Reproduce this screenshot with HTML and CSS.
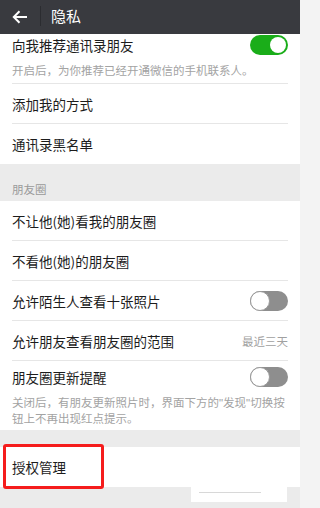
FILE: index.html
```html
<!DOCTYPE html>
<html lang="zh-CN">
<head>
<meta charset="utf-8">
<title>隐私</title>
<link rel="stylesheet" href="styles.css">
</head>
<body>
<div class="page">
  <header class="topbar">
    <svg class="back" width="16" height="14" viewBox="0 0 16 14" aria-hidden="true">
      <path d="M15 7H2.2M7.5 1.3 1.8 7l5.7 5.7" fill="none" stroke="#fff" stroke-width="2"/>
    </svg>
    <span class="divider"></span>
    <span class="title">隐私</span>
  </header>

  <section class="group">
    <div class="item item-tall">
      <div class="item-head">
        <span class="label">向我推荐通讯录朋友</span>
        <span class="switch on"><span class="knob"></span></span>
      </div>
      <p class="note">开启后，为你推荐已经开通微信的手机联系人。</p>
    </div>
    <div class="item"><span class="label">添加我的方式</span></div>
    <div class="item"><span class="label">通讯录黑名单</span></div>
  </section>

  <div class="section-title">朋友圈</div>

  <section class="group">
    <div class="item"><span class="label">不让他(她)看我的朋友圈</span></div>
    <div class="item"><span class="label">不看他(她)的朋友圈</span></div>
    <div class="item">
      <span class="label">允许陌生人查看十张照片</span>
      <span class="switch off"><span class="knob"></span></span>
    </div>
    <div class="item">
      <span class="label">允许朋友查看朋友圈的范围</span>
      <span class="value">最近三天</span>
    </div>
    <div class="item item-last">
      <div class="item-head">
        <span class="label">朋友圈更新提醒</span>
        <span class="switch off"><span class="knob"></span></span>
      </div>
      <p class="note note-two">关闭后，有朋友更新照片时，界面下方的<span class="q">"</span>发现<span class="q">"</span>切换按<br>钮上不再出现红点提示。</p>
    </div>
  </section>

  <div class="spacer"></div>

  <section class="group">
    <div class="item"><span class="label">授权管理</span></div>
  </section>

  <div class="highlight"></div>
  <div class="patch"><span class="patch-line"></span></div>
</div>
</body>
</html>
```

FILE: styles.css
```css
html, body {
  margin: 0;
  padding: 0;
}

body {
  background: #f3f3f3;
  font-family: "Noto Sans CJK SC", "Noto Sans", sans-serif;
  color: #1c1c1c;
}

.page {
  position: relative;
  width: 300px;
  height: 508px;
  overflow: hidden;
  background: #ebebeb;
}

.topbar {
  height: 34px;
  background: #393a3f;
  display: flex;
  align-items: center;
}

.back {
  margin-left: 12px;
  display: block;
}

.divider {
  width: 1px;
  height: 20px;
  background: #2b2c30;
  margin-left: 12px;
  margin-top: -2px;
}

.title {
  color: #fff;
  font-size: 15px;
  line-height: 20px;
  margin-left: 10px;
  margin-top: -3px;
}

.group {
  background: #fff;
  padding: 0 12px;
}

.item {
  box-sizing: border-box;
  height: 40px;
  display: flex;
  align-items: center;
  justify-content: space-between;
  border-bottom: 1px solid #e6e6e6;
}

.item:last-child {
  border-bottom: none;
}

.item-tall {
  height: 50px;
  display: block;
  padding-top: 1px;
}

.item-last {
  height: 69px;
  display: block;
  padding-top: 6px;
}

.item-head {
  display: flex;
  align-items: center;
  justify-content: space-between;
  height: 20px;
}

.label {
  font-size: 13.5px;
  line-height: 20px;
}

.value {
  font-size: 11.5px;
  color: #a0a0a0;
}

.note {
  margin: 7px 0 0;
  font-size: 11.5px;
  line-height: 16px;
  color: #a3a3a3;
  white-space: nowrap;
}

.note-two {
  margin-top: 8px;
  line-height: 15px;
}

.q {
  font-family: "Liberation Sans", sans-serif;
}

.switch {
  box-sizing: border-box;
  width: 38px;
  height: 20px;
  border-radius: 10px;
  display: flex;
  align-items: center;
  flex-shrink: 0;
}

.switch.on {
  background: #1aad19;
  justify-content: flex-end;
  padding: 0 2px;
}

.switch.on .knob {
  width: 16px;
  height: 16px;
  border-radius: 50%;
  background: #fff;
}

.switch.off {
  background: #8e8e8e;
  justify-content: flex-start;
}

.switch.off .knob {
  box-sizing: border-box;
  width: 20px;
  height: 20px;
  border-radius: 50%;
  background: #fff;
  border: 1px solid #9a9a9a;
}

.section-title {
  padding: 17px 12px 4px;
  font-size: 11.5px;
  line-height: 16px;
  color: #9a9a9a;
}

.spacer {
  height: 17px;
}

.highlight {
  position: absolute;
  left: 3px;
  top: 444px;
  width: 101px;
  height: 45px;
  box-sizing: border-box;
  border: 3px solid #f51c1c;
  border-radius: 3px;
}

.patch {
  position: absolute;
  left: 191px;
  top: 487px;
  width: 96px;
  height: 15px;
  background: #fff;
}

.patch-line {
  position: absolute;
  left: 8px;
  top: 5px;
  width: 62px;
  height: 1px;
  background: #d8d8d8;
}
```
